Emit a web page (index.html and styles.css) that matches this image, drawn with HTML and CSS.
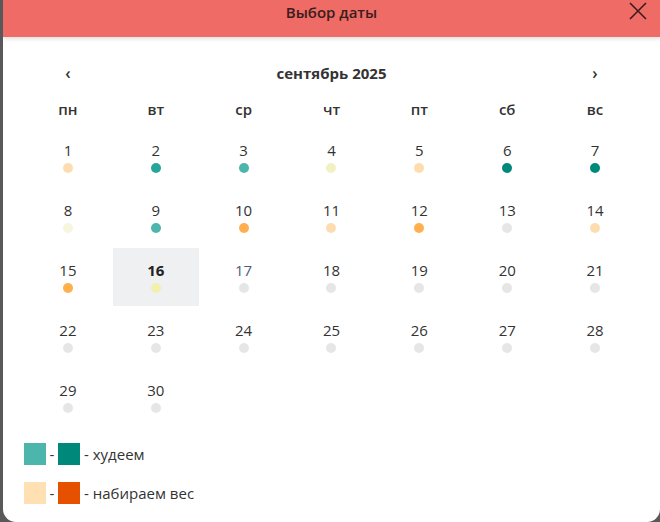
FILE: index.html
```html
<!DOCTYPE html>
<html lang="ru">
<head>
<meta charset="utf-8">
<title>Выбор даты</title>
<link rel="stylesheet" href="styles.css">
</head>
<body>
<div class="modal">
  <div class="header">
    <div class="title">Выбор даты</div>
    <button class="close" aria-label="Закрыть">
      <svg width="20" height="20" viewBox="0 0 20 20"><path d="M2 1 L18 17 M18 1 L2 17" stroke="#3a1c1c" stroke-width="1.6" fill="none"/></svg>
    </button>
  </div>
  <div class="cal">
    <div class="nav">
      <span class="arrow">‹</span>
      <span class="month">сентябрь 2025</span>
      <span class="arrow">›</span>
    </div>
    <div class="grid weekdays">
      <div>пн</div><div>вт</div><div>ср</div><div>чт</div><div>пт</div><div>сб</div><div>вс</div>
    </div>
    <div class="grid days">
      <div class="day"><span class="num">1</span><span class="dot c-peach"></span></div>
      <div class="day"><span class="num">2</span><span class="dot c-teal2"></span></div>
      <div class="day"><span class="num">3</span><span class="dot c-teal1"></span></div>
      <div class="day"><span class="num">4</span><span class="dot c-lemon"></span></div>
      <div class="day"><span class="num">5</span><span class="dot c-peach"></span></div>
      <div class="day"><span class="num">6</span><span class="dot c-teal3"></span></div>
      <div class="day"><span class="num">7</span><span class="dot c-teal3"></span></div>

      <div class="day"><span class="num">8</span><span class="dot c-pale"></span></div>
      <div class="day"><span class="num">9</span><span class="dot c-teal1"></span></div>
      <div class="day"><span class="num">10</span><span class="dot c-orange"></span></div>
      <div class="day"><span class="num">11</span><span class="dot c-peach"></span></div>
      <div class="day"><span class="num">12</span><span class="dot c-orange"></span></div>
      <div class="day"><span class="num">13</span><span class="dot"></span></div>
      <div class="day"><span class="num">14</span><span class="dot c-peach"></span></div>

      <div class="day"><span class="num">15</span><span class="dot c-orange"></span></div>
      <div class="day today"><span class="num">16</span><span class="dot c-lemon2"></span></div>
      <div class="day next"><span class="num">17</span><span class="dot"></span></div>
      <div class="day"><span class="num">18</span><span class="dot"></span></div>
      <div class="day"><span class="num">19</span><span class="dot"></span></div>
      <div class="day"><span class="num">20</span><span class="dot"></span></div>
      <div class="day"><span class="num">21</span><span class="dot"></span></div>

      <div class="day"><span class="num">22</span><span class="dot"></span></div>
      <div class="day"><span class="num">23</span><span class="dot"></span></div>
      <div class="day"><span class="num">24</span><span class="dot"></span></div>
      <div class="day"><span class="num">25</span><span class="dot"></span></div>
      <div class="day"><span class="num">26</span><span class="dot"></span></div>
      <div class="day"><span class="num">27</span><span class="dot"></span></div>
      <div class="day"><span class="num">28</span><span class="dot"></span></div>

      <div class="day"><span class="num">29</span><span class="dot"></span></div>
      <div class="day"><span class="num">30</span><span class="dot"></span></div>
    </div>
    <div class="legend">
      <div class="leg-row">
        <span class="sq c-teal1"></span><span class="dash">-</span><span class="sq c-teal3"></span><span class="leg-text">- худеем</span>
      </div>
      <div class="leg-row">
        <span class="sq c-peach2"></span><span class="dash">-</span><span class="sq c-deep"></span><span class="leg-text">- набираем вес</span>
      </div>
    </div>
  </div>
</div>
</body>
</html>
```

FILE: styles.css
```css
* { box-sizing: border-box; }
html, body { margin: 0; padding: 0; }
body {
  background: #595959;
  width: 660px;
  height: 522px;
  overflow: hidden;
  font-family: "Open Sans", "Noto Sans", sans-serif;
  color: #333;
}
.modal {
  margin-left: 3px;
  width: 657px;
  height: 522px;
  background: #fff;
  border-radius: 0 0 13px 13px;
  overflow: hidden;
}
.header {
  position: relative;
  height: 37px;
  background: #ef6b66;
  box-shadow: 0 2px 4px rgba(0,0,0,0.12);
  display: flex;
  justify-content: center;
  padding-top: 1px;
}
.title {
  font-size: 15px;
  font-weight: 600;
  line-height: 22px;
  color: #3a1c1c;
}
.close {
  position: absolute;
  right: 12px;
  top: 2px;
  width: 20px;
  height: 20px;
  border: 0;
  padding: 0;
  background: none;
  display: flex;
}
.cal {
  padding: 18px 21px 0 21px;
}
.nav {
  display: flex;
  align-items: center;
  height: 36px;
}
.arrow {
  width: 88px;
  text-align: center;
  font-size: 16px;
  font-weight: 600;
  color: #333;
}
.month {
  flex: 1;
  text-align: center;
  font-size: 15px;
  font-weight: 700;
  color: #333;
}
.grid {
  display: grid;
  grid-template-columns: repeat(7, 1fr);
}
.weekdays {
  height: 36px;
  align-items: center;
  text-align: center;
  font-size: 15px;
  font-weight: 600;
  color: #333;
}
.days {
  grid-auto-rows: 60px;
}
.day {
  margin: 1px;
  display: flex;
  flex-direction: column;
  align-items: center;
  padding-top: 12px;
}
.num {
  font-size: 15px;
  line-height: 21px;
  color: #333;
}
.today { background: #eff0f1; }
.today .num { font-weight: 700; color: #222; }
.next .num { color: #4d5d7c; }
.dot {
  margin-top: 2px;
  width: 10px;
  height: 10px;
  border-radius: 50%;
  background: #e6e6e6;
}
.c-peach { background: #fdddb0; }
.c-peach2 { background: #ffe0b2; }
.c-teal1 { background: #4db6ac; }
.c-teal2 { background: #26a69a; }
.c-teal3 { background: #00897b; }
.c-lemon { background: #f3f0c4; }
.c-lemon2 { background: #f2efaf; }
.c-pale { background: #f6f5de; }
.c-orange { background: #ffb04c; }
.c-deep { background: #e65100; }
.legend {
  padding-top: 16px;
  display: flex;
  flex-direction: column;
  gap: 17px;
}
.leg-row {
  display: flex;
  align-items: center;
  height: 22px;
}
.sq {
  width: 22px;
  height: 22px;
}
.dash {
  width: 12px;
  text-align: center;
  font-size: 15px;
  color: #333;
}
.leg-text {
  margin-left: 4px;
  font-size: 15px;
  color: #333;
}
```
